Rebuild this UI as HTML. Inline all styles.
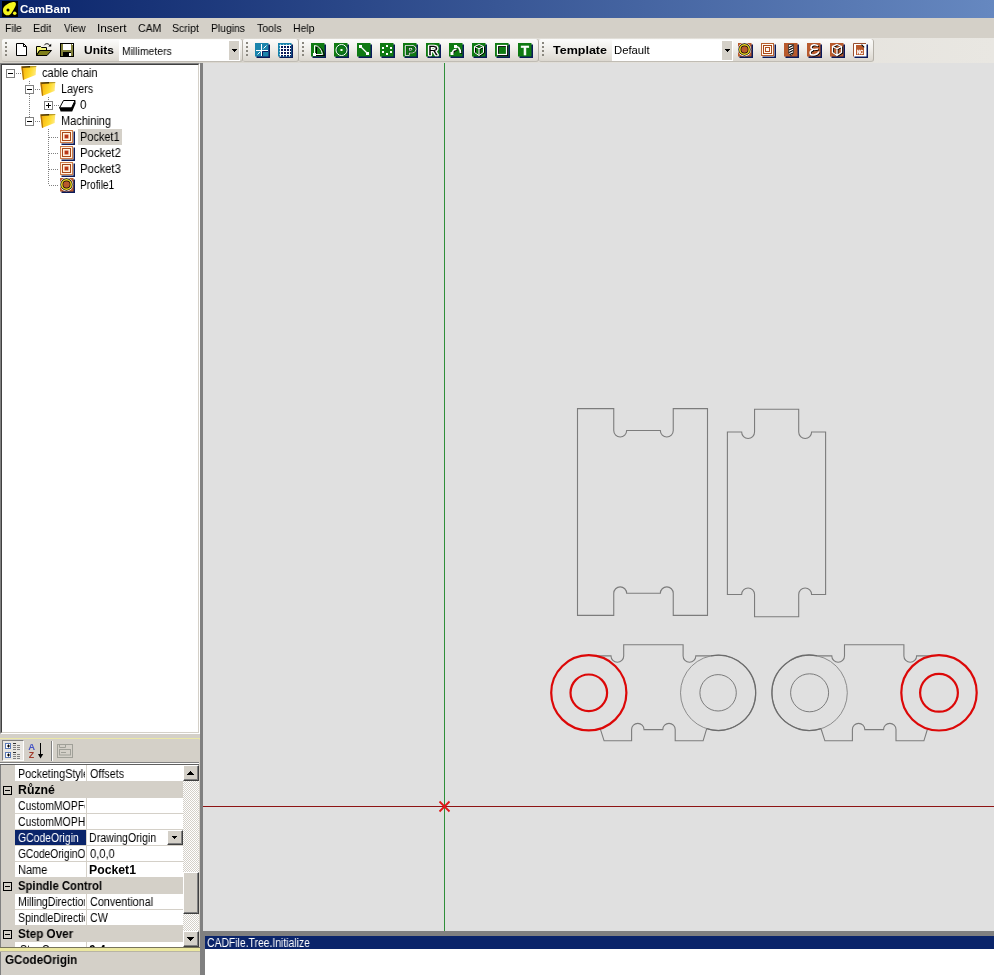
<!DOCTYPE html>
<html>
<head>
<meta charset="utf-8">
<title>CamBam</title>
<style>
html,body{margin:0;padding:0;}
body{width:994px;height:975px;overflow:hidden;background:#d4d0c8;position:relative;
  font-family:"Liberation Sans",sans-serif;font-size:11px;color:#000;line-height:13px;}
.abs{position:absolute;}
.grp{left:0;top:0;width:0;height:0;}
.t{position:absolute;white-space:nowrap;transform-origin:0 50%;line-height:13px;height:13px;will-change:transform;}
#title{left:0;top:0;width:994px;height:18px;background:linear-gradient(90deg,#0a246a 0%,#6688c0 100%);}
#menu{left:0;top:18px;width:994px;height:20px;background:#d4d0c8;}
#tbrow{left:0;top:38px;width:994px;height:25px;background:linear-gradient(90deg,#d6d2ca 0%,#e9e7e2 100%);}
.strip{position:absolute;top:1px;height:23px;border-radius:2px 3px 3px 2px;box-sizing:border-box;
  background:linear-gradient(180deg,#fcfcfb 0%,#f0eeea 45%,#dbd7cf 100%);border-right:1px solid #b4b0a8;border-bottom:1px solid #c0bcb4;}
.grip{position:absolute;left:3px;top:3px;width:2px;height:14px;
  background:repeating-linear-gradient(180deg,#8a877f 0,#8a877f 2px,transparent 2px,transparent 4px);}
.grip:after{content:"";position:absolute;left:1px;top:1px;width:2px;height:14px;
  background:repeating-linear-gradient(180deg,#fff 0,#fff 2px,transparent 2px,transparent 4px);z-index:-1;}
.combo{position:absolute;top:1px;height:21px;background:#fff;}
.combo .btn{position:absolute;right:1px;top:1px;width:10px;height:19px;background:#d4d0c8;}
.combo .btn:after{content:"";position:absolute;left:3px;top:8px;width:5px;height:3px;
  background:linear-gradient(#000,#000) 0 0/5px 1px no-repeat,linear-gradient(#000,#000) 1px 1px/3px 1px no-repeat,linear-gradient(#000,#000) 2px 2px/1px 1px no-repeat;}
#tree{left:0;top:63px;width:200px;height:671px;background:#fff;box-sizing:border-box;
  border-top:1px solid #808080;border-left:1px solid #808080;border-right:1px solid #fff;border-bottom:1px solid #fff;}
#tree:before{content:"";position:absolute;left:0;top:0;right:0;bottom:0;border-top:1px solid #404040;border-left:1px solid #404040;border-right:1px solid #d4d0c8;border-bottom:1px solid #d4d0c8;}
#vsplit{left:200px;top:63px;width:3px;height:912px;background:#808080;}
#hsplit{left:200px;top:931px;width:794px;height:5px;background:#808080;}
#view{left:203px;top:63px;width:791px;height:868px;background:#e0e0e0;}
#log{left:205px;top:936px;width:789px;height:39px;background:#fff;}
#logsel{left:205px;top:936px;width:789px;height:13px;background:#0a246a;}
#vsplit2{left:200px;top:931px;width:5px;height:44px;background:#808080;}
#pgtb{left:0;top:739px;width:199px;height:23px;background:#d4d0c8;box-shadow:0 1px 0 #808080,0 2px 0 #fff,0 3px 0 #606060;}
#pg{left:0;top:765px;width:199px;height:182px;background:#d4d0c8;overflow:hidden;box-shadow:inset 1px 0 0 #808080;}
.row{position:absolute;left:15px;width:168px;height:15px;background:#fff;}
.row .l{position:absolute;left:0;top:0;width:71px;height:100%;}
.row .v{position:absolute;left:71px;top:0;width:96px;height:100%;border-left:1px solid #d4d0c8;}
.cat{position:absolute;left:0;width:183px;height:16px;}
.cat i{position:absolute;left:3px;top:4px;width:7px;height:7px;border:1px solid #000;}
.cat i:before{content:"";position:absolute;left:1px;top:3px;width:5px;height:1px;background:#000;}
.sbtn{position:absolute;width:16px;height:16px;background:#d4d0c8;box-sizing:border-box;
  border-top:1px solid #fff;border-left:1px solid #fff;border-right:1px solid #404040;border-bottom:1px solid #404040;box-shadow:inset -1px -1px 0 #808080;}
#sb{background-image:conic-gradient(#fff 25%,#d4d0c8 0 50%,#fff 0 75%,#d4d0c8 0);background-size:2px 2px;}
.sbtn.up:after,.sbtn.down:after,.sbtn.dd:after{content:"";position:absolute;}
.sbtn.up:after{left:3px;top:5px;width:7px;height:4px;
  background:linear-gradient(#000,#000) 3px 0/1px 1px no-repeat,linear-gradient(#000,#000) 2px 1px/3px 1px no-repeat,linear-gradient(#000,#000) 1px 2px/5px 1px no-repeat,linear-gradient(#000,#000) 0 3px/7px 1px no-repeat;}
.sbtn.down:after{left:3px;top:5px;width:7px;height:4px;
  background:linear-gradient(#000,#000) 0 0/7px 1px no-repeat,linear-gradient(#000,#000) 1px 1px/5px 1px no-repeat,linear-gradient(#000,#000) 2px 2px/3px 1px no-repeat,linear-gradient(#000,#000) 3px 3px/1px 1px no-repeat;}
.sbtn.dd:after{left:4px;top:5px;width:5px;height:3px;
  background:linear-gradient(#000,#000) 0 0/5px 1px no-repeat,linear-gradient(#000,#000) 1px 1px/3px 1px no-repeat,linear-gradient(#000,#000) 2px 2px/1px 1px no-repeat;}
#pgline{left:0;top:738px;width:200px;height:2px;background:linear-gradient(180deg,#ebe8a6 0,#ebe8a6 50%,#dfdcb8 50%,#dfdcb8 100%);}
#pgsep{left:0;top:947px;width:200px;height:5px;background:linear-gradient(180deg,#77745c 0,#77745c 1px,#ece8a0 1px,#ece8a0 4px,#b8b4a4 4px,#b8b4a4 5px);}
#pgdesc{left:0;top:952px;width:200px;height:23px;background:#d4d0c8;box-shadow:inset 1px 0 0 #808080;}

</style>
</head>
<body>
<!-- TITLE -->
<div id="title" class="abs">
  <svg class="abs" style="left:2px;top:1px" width="16" height="16" viewBox="0 0 16 16">
    <rect width="16" height="16" fill="#000"/>
    <path d="M1 9 C1 5 6 2 11 1 C14 0.6 14.5 2.5 13.5 5 C12.5 7.5 11 9.5 9.5 12 C8 14.5 5 15 3 13.5 C1.6 12.5 1 11 1 9 Z" fill="#f4f41c"/>
    <circle cx="12.7" cy="12.2" r="1.8" fill="#f4f41c"/>
    <circle cx="6" cy="9" r="1.5" fill="#000"/>
  </svg>
</div>
<!-- MENU -->
<div id="menu" class="abs"></div>
<!-- TOOLBAR ROW -->
<div id="tbrow" class="abs">
  <div class="strip" style="left:2px;width:241px"><div class="grip"></div>
    <div class="combo" style="left:117px;width:121px"><div class="btn"></div></div>
  </div>
  <div class="strip" style="left:243px;width:56px"><div class="grip"></div></div>
  <div class="strip" style="left:299px;width:240px"><div class="grip"></div></div>
  <div class="strip" style="left:539px;width:335px"><div class="grip"></div>
    <div class="combo" style="left:73px;width:121px"><div class="btn"></div></div>
  </div>
  <svg class="abs" style="left:0;top:0;will-change:transform" width="994" height="25" viewBox="0 38 994 25">
<path d="M16.5 43.5 H23.5 L26.5 46.5 V55.5 H16.5 Z" fill="#fff" stroke="#000"/><path d="M23.5 43.5 V46.5 H26.5" fill="none" stroke="#000"/>
<path d="M36.5 55.5 V46.5 H40.5 L41.5 47.5 H46.5 V50.5 H39.5 L36.5 55.5 Z" fill="#f4f47c" stroke="#000" stroke-linejoin="miter"/><path d="M36.5 55.5 L39.8 50.5 H51.5 L47 55.5 Z" fill="#80801a" stroke="#000"/><path d="M44.3 45.2 C45.5 43.2 48.5 43 50.3 46" fill="none" stroke="#000" stroke-width="1"/><path d="M48.3 46.6 H51.2 V43.8 Z" fill="#000"/>
<rect x="60.5" y="43.5" width="13" height="13" fill="#80803a" stroke="#000"/><rect x="63" y="44" width="8" height="6" fill="#fff"/><rect x="63" y="52" width="8" height="4" fill="#000"/><rect x="69" y="53" width="2" height="3" fill="#fff"/><rect x="72" y="44" width="1" height="1" fill="#fff"/>
<rect x="256.5" y="44.5" width="13.5" height="13.5" fill="#0a1a5a"/><rect x="255" y="43" width="13.5" height="13.5" fill="#1a84ac"/>
<path d="M256 50.5 H268 M261.5 44 V56" stroke="#fff" stroke-width="1" fill="none"/><path d="M262.5 51.5 H268 M262.5 51.5 V56" stroke="#0a1a5a" stroke-width="1" fill="none"/><path d="M263.5 48.5 L266.5 45.5 M257.5 54.5 L260.5 51.5" stroke="#fff" stroke-width="1" fill="none"/>
<rect x="279.5" y="44.5" width="13.5" height="13.5" fill="#0a1a5a"/><rect x="278" y="43" width="13.5" height="13.5" fill="#1a84ac"/>
<rect x="280" y="45" width="11" height="11" fill="#0a1a5a"/>
<path d="M280.5 44.5 V56.5 M279.5 45.5 H291 M283.5 44.5 V56.5 M279.5 48.5 H291 M286.5 44.5 V56.5 M279.5 51.5 H291 M289.5 44.5 V56.5 M279.5 54.5 H291" stroke="#fff" stroke-width="1" fill="none"/>
<rect x="312.5" y="44.5" width="13.5" height="13.5" fill="#0a1a5a"/><rect x="311" y="43" width="13.5" height="13.5" fill="#0f7a12"/>
<rect x="335.5" y="44.5" width="13.5" height="13.5" fill="#0a1a5a"/><rect x="334" y="43" width="13.5" height="13.5" fill="#0f7a12"/>
<rect x="358.5" y="44.5" width="13.5" height="13.5" fill="#0a1a5a"/><rect x="357" y="43" width="13.5" height="13.5" fill="#0f7a12"/>
<rect x="381.5" y="44.5" width="13.5" height="13.5" fill="#0a1a5a"/><rect x="380" y="43" width="13.5" height="13.5" fill="#0f7a12"/>
<rect x="404.5" y="44.5" width="13.5" height="13.5" fill="#0a1a5a"/><rect x="403" y="43" width="13.5" height="13.5" fill="#0f7a12"/>
<rect x="427.5" y="44.5" width="13.5" height="13.5" fill="#0a1a5a"/><rect x="426" y="43" width="13.5" height="13.5" fill="#0f7a12"/>
<rect x="450.5" y="44.5" width="13.5" height="13.5" fill="#0a1a5a"/><rect x="449" y="43" width="13.5" height="13.5" fill="#0f7a12"/>
<rect x="473.5" y="44.5" width="13.5" height="13.5" fill="#0a1a5a"/><rect x="472" y="43" width="13.5" height="13.5" fill="#0f7a12"/>
<rect x="496.5" y="44.5" width="13.5" height="13.5" fill="#0a1a5a"/><rect x="495" y="43" width="13.5" height="13.5" fill="#0f7a12"/>
<rect x="519.5" y="44.5" width="13.5" height="13.5" fill="#0a1a5a"/><rect x="518" y="43" width="13.5" height="13.5" fill="#0f7a12"/>
<path d="M315.5 54 V45.5 Q322 46 323.5 54.5 H315" fill="none" stroke="#000" stroke-width="1" transform="translate(1 1)"/><path d="M314.5 54 V45.5 Q321 46 322.5 54.5 H315" fill="none" stroke="#fff" stroke-width="1"/><rect x="313" y="53" width="3" height="3" fill="#fff"/>
<circle cx="341.5" cy="50" r="5.5" fill="none" stroke="#fff" stroke-width="1"/><circle cx="341.5" cy="50" r="4.3" fill="none" stroke="#053" stroke-width="0.8"/><rect x="340.5" y="49" width="2" height="2" fill="#fff"/>
<path d="M360.5 46.5 L367.5 53.5" stroke="#fff" stroke-width="1.3"/><rect x="359" y="45" width="3" height="3" fill="#fff"/><rect x="366" y="52" width="3" height="3" fill="#fff"/>
<rect x="386" y="45" width="2" height="2" fill="#fff"/>
<rect x="382" y="47" width="2" height="2" fill="#fff"/>
<rect x="390" y="47" width="2" height="2" fill="#fff"/>
<rect x="382" y="51" width="2" height="2" fill="#fff"/>
<rect x="390" y="51" width="2" height="2" fill="#fff"/>
<rect x="386" y="53" width="2" height="2" fill="#fff"/>
<text transform="translate(404.9 54.6) scale(1.28 1)" font-family="Liberation Sans, sans-serif" font-weight="bold" font-size="12.6" fill="#000" stroke="#000" stroke-width="1.7" stroke-linejoin="round">P</text><text transform="translate(404.9 54.6) scale(1.28 1)" font-family="Liberation Sans, sans-serif" font-weight="bold" font-size="12.6" fill="#0f7a12" stroke="#fff" stroke-width="1.9" stroke-linejoin="round" paint-order="stroke">P</text><text transform="translate(404.9 54.6) scale(1.28 1)" font-family="Liberation Sans, sans-serif" font-weight="bold" font-size="12.6" fill="#0f7a12" stroke="#031" stroke-width="0.5" stroke-linejoin="round">P</text>
<text transform="translate(428.3 55) scale(1.08 1)" font-family="Liberation Sans, sans-serif" font-size="12.6" fill="#fff" stroke="#fff" stroke-width="2.7" stroke-linejoin="round">R</text><text transform="translate(428.3 55) scale(1.08 1)" font-family="Liberation Sans, sans-serif" font-size="12.6" fill="#000" stroke="#000" stroke-width="0.25">R</text>
<path d="M452 53.5 Q453 49 456.5 49.5 M455 46.5 Q460 46 460.5 53" fill="none" stroke="#000" stroke-width="1.6" transform="translate(0.8 0.8)"/><path d="M452 53.5 Q453 49 456.5 49.5 M455 46.5 Q460 46 460.5 53" fill="none" stroke="#fff" stroke-width="1.6"/><rect x="450.5" y="52" width="3" height="3" fill="#fff"/><rect x="454" y="45" width="3" height="3" fill="#fff"/>
<path d="M479 44.5 L483.5 46.5 V52.5 L479 55.5 L474.5 52.5 V46.5 Z M474.5 46.5 L479 48.8 L483.5 46.5 M479 48.8 V55.5" fill="none" stroke="#000" stroke-width="1" transform="translate(1 0.6)"/><path d="M479 44.5 L483.5 46.5 V52.5 L479 55.5 L474.5 52.5 V46.5 Z M474.5 46.5 L479 48.8 L483.5 46.5 M479 48.8 V55.5" fill="none" stroke="#fff" stroke-width="1"/>
<rect x="498.5" y="46.5" width="9" height="9" fill="none" stroke="#000"/><rect x="497.5" y="45.5" width="9" height="9" fill="none" stroke="#fff" stroke-width="1.2"/>
<text x="521" y="55.3" font-family="Liberation Sans, sans-serif" font-weight="bold" font-size="13" fill="#fff" stroke="#fff" stroke-width="0.5">T</text>
<rect x="739.5" y="44.5" width="13.5" height="13.5" fill="#0a1a5a"/><rect x="738" y="43" width="13.5" height="13.5" fill="#b85a2c"/>
<circle cx="744.5" cy="49.5" r="6.7" fill="#fff"/><circle cx="744.5" cy="49.5" r="4.7" fill="#b85a2c" stroke="#000" stroke-width="2.9"/><circle cx="744.5" cy="49.5" r="4.7" fill="none" stroke="#f4dc20" stroke-width="1.5"/>
<rect x="762.5" y="44.5" width="13.5" height="13.5" fill="#0a1a5a"/><rect x="761" y="43" width="13.5" height="13.5" fill="#fffaf2"/>
<rect x="761.5" y="43.5" width="12" height="12" fill="none" stroke="#b86030"/><rect x="763.5" y="45.5" width="8" height="8" fill="none" stroke="#a84818"/><rect x="765.5" y="47.5" width="4" height="4" fill="none" stroke="#b05020"/>
<rect x="785.5" y="44.5" width="13.5" height="13.5" fill="#0a1a5a"/><rect x="784" y="43" width="13.5" height="13.5" fill="#b85a2c"/>
<path d="M788.5 44.5 H793.5 V53 L791 56 L788.5 53 Z" fill="#fff" stroke="#000" stroke-width="0.6"/><path d="M789 47.5 L793 45.5 M789 50 L793 48 M789 52.5 L793 50.5 M790 54.5 L793 53" stroke="#000" stroke-width="1.1" fill="none"/>
<rect x="808.5" y="44.5" width="13.5" height="13.5" fill="#0a1a5a"/><rect x="807" y="43" width="13.5" height="13.5" fill="#b85a2c"/>
<path d="M818 46 C816 44 811 44 811 47.5 C811 50 816 49.5 818 49 M813 50 C809 51 809 55.5 814 55 C817 54.7 818.5 53 819 51.5" fill="none" stroke="#000" stroke-width="1.6" transform="translate(0.7 0.7)"/><path d="M818 46 C816 44 811 44 811 47.5 C811 50 816 49.5 818 49 M813 50 C809 51 809 55.5 814 55 C817 54.7 818.5 53 819 51.5" fill="none" stroke="#fff" stroke-width="1.5"/>
<rect x="831.5" y="44.5" width="13.5" height="13.5" fill="#0a1a5a"/><rect x="830" y="43" width="13.5" height="13.5" fill="#b85a2c"/>
<path d="M837 44.5 L841.5 46.5 V52.5 L837 55.5 L832.5 52.5 V46.5 Z M832.5 46.5 L837 48.8 L841.5 46.5 M837 48.8 V55.5" fill="none" stroke="#000" stroke-width="1.2" transform="translate(0.9 0.6)"/><path d="M837 44.5 L841.5 46.5 V52.5 L837 55.5 L832.5 52.5 V46.5 Z M832.5 46.5 L837 48.8 L841.5 46.5 M837 48.8 V55.5" fill="none" stroke="#fff" stroke-width="1.3"/>
<rect x="854.5" y="44.5" width="13.5" height="13.5" fill="#0a1a5a"/><rect x="853" y="43" width="13.5" height="13.5" fill="#fff"/>
<path d="M853.5 56.5 V43.5 H866" fill="none" stroke="#9a5030" stroke-width="1"/><path d="M856 45 H861.5 L864 47.5 V55 H856 Z" fill="#b85a2c"/><path d="M861.5 44.6 L864.2 47.3" stroke="#000" stroke-width="1.1"/><text x="856.9" y="53.8" font-family="Liberation Sans, sans-serif" font-weight="bold" font-size="5.4" fill="#fff" stroke="#fff" stroke-width="0.3" textLength="6.4" lengthAdjust="spacingAndGlyphs">NC</text>
  </svg>
</div>
<!-- TREE -->
<div id="tree" class="abs">
  <div class="abs" style="left:77px;top:65px;width:44px;height:16px;background:#d4d0c8"></div>
  <svg class="abs" style="left:-1px;top:-1px" width="199" height="670" viewBox="0 63 199 670">
<defs><linearGradient id="fg" x1="0" y1="0" x2="1" y2="0.25"><stop offset="0" stop-color="#e89808"/><stop offset="0.35" stop-color="#fbc418"/><stop offset="0.7" stop-color="#ffdc30"/><stop offset="1" stop-color="#ffe878"/></linearGradient></defs>
<path d="M16 73.5 H21" stroke="#808080" stroke-dasharray="1 1" stroke-width="1" fill="none"/>
<path d="M29.5 81 V85" stroke="#808080" stroke-dasharray="1 1" stroke-width="1" fill="none"/>
<path d="M29.5 94 V117" stroke="#808080" stroke-dasharray="1 1" stroke-width="1" fill="none"/>
<path d="M35 89.5 H40" stroke="#808080" stroke-dasharray="1 1" stroke-width="1" fill="none"/>
<path d="M48.5 97 V101" stroke="#808080" stroke-dasharray="1 1" stroke-width="1" fill="none"/>
<path d="M54 105.5 H59" stroke="#808080" stroke-dasharray="1 1" stroke-width="1" fill="none"/>
<path d="M35 121.5 H40" stroke="#808080" stroke-dasharray="1 1" stroke-width="1" fill="none"/>
<path d="M48.5 129 V185" stroke="#808080" stroke-dasharray="1 1" stroke-width="1" fill="none"/>
<path d="M49 137.5 H59" stroke="#808080" stroke-dasharray="1 1" stroke-width="1" fill="none"/>
<path d="M49 153.5 H59" stroke="#808080" stroke-dasharray="1 1" stroke-width="1" fill="none"/>
<path d="M49 169.5 H59" stroke="#808080" stroke-dasharray="1 1" stroke-width="1" fill="none"/>
<path d="M49 185.5 H59" stroke="#808080" stroke-dasharray="1 1" stroke-width="1" fill="none"/>
<rect x="6.5" y="69.5" width="8" height="8" fill="#fff" stroke="#808080"/><rect x="8" y="73" width="5" height="1" fill="#000"/>
<rect x="25.5" y="85.5" width="8" height="8" fill="#fff" stroke="#808080"/><rect x="27" y="89" width="5" height="1" fill="#000"/>
<rect x="44.5" y="101.5" width="8" height="8" fill="#fff" stroke="#808080"/><rect x="46" y="105" width="5" height="1" fill="#000"/><rect x="48" y="103" width="1" height="5" fill="#000"/>
<rect x="25.5" y="117.5" width="8" height="8" fill="#fff" stroke="#808080"/><rect x="27" y="121" width="5" height="1" fill="#000"/>
<g transform="translate(21 65)"><path d="M0.3 1.6 L15.3 1.1 L14.6 10 L2 14.9 Z" fill="url(#fg)"/><path d="M0.3 1.6 L2 14.9 L3.2 14.4 L1.8 2.6 Z" fill="#a86a08" opacity="0.85"/><path d="M0.3 1.4 L9.5 1.1 L9 2.4 L1.6 2.8 Z" fill="#3a2800"/><path d="M9.5 1.1 L15.3 1.0 L15.2 1.9 L9 2.4 Z" fill="#a88a20" opacity="0.8"/></g>
<g transform="translate(40 81)"><path d="M0.3 1.6 L15.3 1.1 L14.6 10 L2 14.9 Z" fill="url(#fg)"/><path d="M0.3 1.6 L2 14.9 L3.2 14.4 L1.8 2.6 Z" fill="#a86a08" opacity="0.85"/><path d="M0.3 1.4 L9.5 1.1 L9 2.4 L1.6 2.8 Z" fill="#3a2800"/><path d="M9.5 1.1 L15.3 1.0 L15.2 1.9 L9 2.4 Z" fill="#a88a20" opacity="0.8"/></g>
<g transform="translate(40 113)"><path d="M0.3 1.6 L15.3 1.1 L14.6 10 L2 14.9 Z" fill="url(#fg)"/><path d="M0.3 1.6 L2 14.9 L3.2 14.4 L1.8 2.6 Z" fill="#a86a08" opacity="0.85"/><path d="M0.3 1.4 L9.5 1.1 L9 2.4 L1.6 2.8 Z" fill="#3a2800"/><path d="M9.5 1.1 L15.3 1.0 L15.2 1.9 L9 2.4 Z" fill="#a88a20" opacity="0.8"/></g>
<path d="M63.5 100.5 H75 L71.5 108 H59.5 Z" fill="#fff" stroke="#000" stroke-width="1"/><path d="M59.3 107.6 H71.6 L75.4 100.2 L75.6 103.6 L72.2 111.4 H60.6 Z" fill="#000"/>
<rect x="61.5" y="131.5" width="13.5" height="13.5" fill="#0a1a5a"/><rect x="60" y="130" width="13.5" height="13.5" fill="#fff2e0"/><rect x="60.5" y="130.5" width="12" height="12" fill="none" stroke="#cc7a48"/><rect x="62.5" y="132.5" width="8" height="8" fill="none" stroke="#a84818"/><rect x="64.5" y="134.5" width="4" height="4" fill="#c8502a" stroke="#fff2e0" stroke-width="0"/><rect x="65" y="135" width="3" height="3" fill="#b83818"/>
<rect x="61.5" y="147.5" width="13.5" height="13.5" fill="#0a1a5a"/><rect x="60" y="146" width="13.5" height="13.5" fill="#fff2e0"/><rect x="60.5" y="146.5" width="12" height="12" fill="none" stroke="#cc7a48"/><rect x="62.5" y="148.5" width="8" height="8" fill="none" stroke="#a84818"/><rect x="64.5" y="150.5" width="4" height="4" fill="#c8502a" stroke="#fff2e0" stroke-width="0"/><rect x="65" y="151" width="3" height="3" fill="#b83818"/>
<rect x="61.5" y="163.5" width="13.5" height="13.5" fill="#0a1a5a"/><rect x="60" y="162" width="13.5" height="13.5" fill="#fff2e0"/><rect x="60.5" y="162.5" width="12" height="12" fill="none" stroke="#cc7a48"/><rect x="62.5" y="164.5" width="8" height="8" fill="none" stroke="#a84818"/><rect x="64.5" y="166.5" width="4" height="4" fill="#c8502a" stroke="#fff2e0" stroke-width="0"/><rect x="65" y="167" width="3" height="3" fill="#b83818"/>
<rect x="61.5" y="179.5" width="13.5" height="13.5" fill="#0a1a5a"/><rect x="60" y="178" width="13.5" height="13.5" fill="#b85a2c"/><circle cx="66.5" cy="184.5" r="6.7" fill="#fff"/><circle cx="66.5" cy="184.5" r="4.7" fill="#b85a2c" stroke="#000" stroke-width="2.9"/><circle cx="66.5" cy="184.5" r="4.7" fill="none" stroke="#f4dc20" stroke-width="1.5"/>
  </svg>
</div>
<!-- VIEW -->
<div id="view" class="abs">
<svg class="abs" style="left:0;top:0" width="791" height="868" viewBox="203 63 791 868" fill="none">
  <line x1="444.5" y1="63" x2="444.5" y2="931" stroke="#2f8f3a" stroke-width="1"/>
  <line x1="203" y1="806.5" x2="994" y2="806.5" stroke="#8e1414" stroke-width="1"/>
  <path d="M439.5 801.5 L449.5 811.5 M449.5 801.5 L439.5 811.5" stroke="#e01818" stroke-width="1.8"/>
  <g stroke="#7c7c7c" stroke-width="1.1">
    <path d="M577.5 408.6 H613.75 V430.55 A6.45 6.45 0 0 0 626.65 430.55 H660.35 A6.45 6.45 0 0 0 673.25 430.55 V408.6 H707.5 V615.4 H673.25 V593.3 A6.45 6.45 0 0 0 660.35 593.3 H626.65 A6.45 6.45 0 0 0 613.75 593.3 V615.4 H577.5 Z"/>
    <path d="M727.4 432 H741.65 A6.45 6.45 0 0 0 754.55 432 V409.3 H798.7 V432 A6.45 6.45 0 0 0 811.6 432 H825.6 V594.5 H811.6 A6.45 6.45 0 0 0 798.7 594.5 V616.8 H754.55 V594.5 A6.45 6.45 0 0 0 741.65 594.5 H727.4 Z"/>
  </g>
  <g stroke="#7c7c7c" stroke-width="1.1">
    <path d="M596.02 655.9 H611.00 A6.35 6.35 0 0 0 623.70 655.9 V644.8 H683.10 V655.9 A6.35 6.35 0 0 0 695.80 655.9 H710.88 M600.20 728.63 L604.10 740.8 H631.60 V729.6 A6.2 6.2 0 0 1 644.00 729.6 H662.80 A6.2 6.2 0 0 1 675.20 729.6 V740.8 H703.10 L706.70 728.63"/>
    <circle cx="718.1" cy="692.8" r="37.6" stroke="#8c8c8c" stroke-width="1"/>
    <path d="M710.88 655.9 A37.6 37.6 0 1 1 706.70 728.63" stroke="#6c6c6c" stroke-width="1.3"/>
    <circle cx="718.1" cy="692.8" r="18.2" stroke-width="1"/>
  </g>
  <g stroke="#dc0808" stroke-width="2.2"><circle cx="588.8" cy="692.8" r="37.6"/><circle cx="588.8" cy="692.8" r="18.3"/></g>
  <g stroke="#7c7c7c" stroke-width="1.1">
    <path d="M817.33 655.9 H831.80 A6.35 6.35 0 0 0 844.50 655.9 V644.8 H903.90 V655.9 A6.35 6.35 0 0 0 916.60 655.9 H931.27 M821.03 728.72 L824.90 740.8 H852.40 V729.6 A6.2 6.2 0 0 1 864.80 729.6 H883.60 A6.2 6.2 0 0 1 896.00 729.6 V740.8 H923.90 L927.57 728.72"/>
    <circle cx="809.6" cy="692.8" r="37.7" stroke="#8c8c8c" stroke-width="1"/>
    <path d="M817.33 655.9 A37.7 37.7 0 1 0 821.03 728.72" stroke="#6c6c6c" stroke-width="1.3"/>
    <circle cx="809.6" cy="692.8" r="19.0" stroke-width="1"/>
  </g>
  <g stroke="#dc0808" stroke-width="2.2"><circle cx="939.0" cy="692.8" r="37.7"/><circle cx="939.0" cy="692.8" r="18.9"/></g>
</svg>
</div>
<div id="vsplit" class="abs"></div>
<div id="hsplit" class="abs"></div>
<div id="vsplit2" class="abs"></div>
<div id="log" class="abs"></div>
<div id="logsel" class="abs"></div>
<!-- PROPERTY GRID -->
<div id="pgline" class="abs"></div>
<div id="pgtb" class="abs">
<div class="abs" style="left:2px;top:1px;width:22px;height:21px;background:#e9e7e2;border:1px solid #808080;box-sizing:border-box;border-right-color:#fff;border-bottom-color:#fff"></div>
<div class="abs" style="left:51px;top:2px;width:1px;height:20px;background:#808080;border-right:1px solid #fff"></div>
<svg class="abs" style="left:0;top:0;will-change:transform" width="199" height="24" viewBox="0 739 199 24">
<g fill="#fff" stroke="#5a7ab8" stroke-width="1"><rect x="5.5" y="743.5" width="5" height="5"/><rect x="5.5" y="752.5" width="5" height="5"/></g>
<g fill="#000"><rect x="7" y="745.5" width="3" height="1"/><rect x="8" y="744.5" width="1" height="3"/><rect x="7" y="754.5" width="3" height="1"/><rect x="8" y="753.5" width="1" height="3"/></g>
<path d="M13 745.5 H16 M17 745.5 H20 M13 747.5 H16 M17 747.5 H20 M13 749.5 H16 M17 749.5 H20 M13 754.5 H16 M17 754.5 H20 M13 756.5 H16 M17 756.5 H20 M13 758.5 H16 M17 758.5 H20" stroke="#808080" stroke-width="1"/>
<path d="M13 743.5 H16 M13 752.5 H16" stroke="#303030" stroke-width="1"/>
<text x="28.2" y="749.8" font-family="Liberation Sans, sans-serif" font-size="9.5" font-weight="bold" fill="#4452c4">A</text>
<text x="28.8" y="758" font-family="Liberation Sans, sans-serif" font-size="8.8" font-weight="bold" fill="#a03c2c">Z</text>
<path d="M40.5 743 V757" stroke="#000" stroke-width="1"/><path d="M38 754 H43.2 L40.5 758.5 Z" fill="#000"/>
<g fill="none" stroke="#a0a098" stroke-width="1"><rect x="57.5" y="744.5" width="15" height="13"/><path d="M59.5 744.5 V747.5 H65.5 V744.5"/><rect x="59.5" y="749.5" width="11" height="5.5"/><path d="M61 752.5 H66"/></g>
</svg>
</div>
<div id="pg" class="abs">
  <div class="row" style="top:0px;height:16px"><div class="l"></div><div class="v"></div></div>
  <div class="cat" style="top:17px"><i></i></div>
  <div class="row" style="top:33px;height:15px"><div class="l"></div><div class="v"></div></div>
  <div class="row" style="top:49px;height:15px"><div class="l"></div><div class="v"></div></div>
  <div class="row" style="top:65px;height:15px"><div class="l" style="background:#0a246a"></div><div class="v"></div><div class="sbtn dd" style="left:152px;top:0;width:16px;height:15px"></div></div>
  <div class="row" style="top:81px;height:15px"><div class="l"></div><div class="v"></div></div>
  <div class="row" style="top:97px;height:15px"><div class="l"></div><div class="v"></div></div>
  <div class="cat" style="top:113px"><i></i></div>
  <div class="row" style="top:129px;height:15px"><div class="l"></div><div class="v"></div></div>
  <div class="row" style="top:145px;height:15px"><div class="l"></div><div class="v"></div></div>
  <div class="cat" style="top:161px"><i></i></div>
  <div class="row" style="top:177px;height:15px"><div class="l"></div><div class="v"></div></div>
  <div class="abs" id="sb" style="left:183px;top:0;width:16px;height:182px"></div>
  <div class="sbtn up" style="left:183px;top:0"></div>
  <div class="sbtn" style="left:183px;top:107px;height:42px"></div>
  <div class="sbtn down" style="left:183px;top:166px"></div>
</div>
<div id="pgsep" class="abs"></div>
<div id="pgdesc" class="abs"></div>
<!-- TEXT -->
<div class="abs grp" id="title-text">
  <div class="t" id="t0" style="left:20.00px;top:3px;color:#fff;font-size:11px;font-weight:bold;transform:scaleX(1.0528);">CamBam</div>
</div>
<div class="abs grp" id="menubar">
  <div class="t" id="t1" style="left:5.00px;top:22px;color:#000;font-size:11px;transform:scaleX(0.9546);">File</div>
  <div class="t" id="t2" style="left:33.00px;top:22px;color:#000;font-size:11px;transform:scaleX(0.9721);">Edit</div>
  <div class="t" id="t3" style="left:64.00px;top:22px;color:#000;font-size:11px;transform:scaleX(0.9029);">View</div>
  <div class="t" id="t4" style="left:97.00px;top:22px;color:#000;font-size:11px;transform:scaleX(1.0740);">Insert</div>
  <div class="t" id="t5" style="left:138.00px;top:22px;color:#000;font-size:11px;transform:scaleX(0.9575);">CAM</div>
  <div class="t" id="t6" style="left:172.00px;top:22px;color:#000;font-size:11px;transform:scaleX(0.9562);">Script</div>
  <div class="t" id="t7" style="left:211.00px;top:22px;color:#000;font-size:11px;transform:scaleX(0.9415);">Plugins</div>
  <div class="t" id="t8" style="left:257.00px;top:22px;color:#000;font-size:11px;transform:scaleX(0.9593);">Tools</div>
  <div class="t" id="t9" style="left:293.00px;top:22px;color:#000;font-size:11px;transform:scaleX(0.9526);">Help</div>
</div>
<div class="abs grp" id="toolbar-labels">
  <div class="t" id="t10" style="left:84.00px;top:44px;color:#000;font-size:11px;font-weight:bold;transform:scaleX(1.0903);">Units</div>
  <div class="t" id="t11" style="left:122.00px;top:45px;color:#000;font-size:11px;transform:scaleX(0.9465);">Millimeters</div>
  <div class="t" id="t12" style="left:553.00px;top:44px;color:#000;font-size:11px;font-weight:bold;transform:scaleX(1.1363);">Template</div>
  <div class="t" id="t13" style="left:614.00px;top:44px;color:#000;font-size:11px;transform:scaleX(1.0258);">Default</div>
</div>
<div class="abs grp" id="tree-labels">
  <div class="t" id="t14" style="left:42.00px;top:67px;color:#000;font-size:12px;transform:scaleX(0.9148);">cable chain</div>
  <div class="t" id="t15" style="left:61.00px;top:83px;color:#000;font-size:12px;transform:scaleX(0.8931);">Layers</div>
  <div class="t" id="t16" style="left:80.00px;top:99px;color:#000;font-size:12px;transform:scaleX(0.9625);">0</div>
  <div class="t" id="t17" style="left:61.00px;top:115px;color:#000;font-size:12px;transform:scaleX(0.9143);">Machining</div>
  <div class="t" id="t18" style="left:80.00px;top:131px;color:#000;font-size:12px;transform:scaleX(0.9119);">Pocket1</div>
  <div class="t" id="t19" style="left:80.00px;top:147px;color:#000;font-size:12px;transform:scaleX(0.9411);">Pocket2</div>
  <div class="t" id="t20" style="left:80.00px;top:163px;color:#000;font-size:12px;transform:scaleX(0.9406);">Pocket3</div>
  <div class="t" id="t21" style="left:80.00px;top:179px;color:#000;font-size:12px;transform:scaleX(0.8387);">Profile1</div>
</div>
<div class="abs grp" id="log-lines">
  <div class="t" id="t22" style="left:207.00px;top:937px;color:#fff;font-size:12px;transform:scaleX(0.8653);">CADFile.Tree.Initialize</div>
</div>
<div class="abs grp" id="propgrid-help">
  <div class="t" id="t23" style="left:5.00px;top:954px;color:#000;font-size:12px;font-weight:bold;transform:scaleX(0.9677);">GCodeOrigin</div>
</div>
<div class="abs grp" id="propgrid-cells">
  <div class="abs" style="left:15px;top:0;width:70px;height:975px;overflow:hidden"><div class="t" id="t24" style="left:3.00px;top:768px;color:#000;font-size:12px;transform:scaleX(0.8950);">PocketingStyle</div></div>
  <div class="t" id="t25" style="left:90.00px;top:768px;color:#000;font-size:12px;transform:scaleX(0.9044);">Offsets</div>
  <div class="t" id="t26" style="left:18.00px;top:784px;color:#000;font-size:12px;font-weight:bold;transform:scaleX(1.0245);">Různé</div>
  <div class="abs" style="left:15px;top:0;width:70px;height:975px;overflow:hidden"><div class="t" id="t27" style="left:3.00px;top:800px;color:#000;font-size:12px;transform:scaleX(0.8700);">CustomMOPFooter</div></div>
  <div class="abs" style="left:15px;top:0;width:70px;height:975px;overflow:hidden"><div class="t" id="t28" style="left:3.00px;top:816px;color:#000;font-size:12px;transform:scaleX(0.8700);">CustomMOPHeader</div></div>
  <div class="t" id="t29" style="left:18.00px;top:832px;color:#fff;font-size:12px;transform:scaleX(0.8674);">GCodeOrigin</div>
  <div class="t" id="t30" style="left:89.00px;top:832px;color:#000;font-size:12px;transform:scaleX(0.8845);">DrawingOrigin</div>
  <div class="abs" style="left:15px;top:0;width:70px;height:975px;overflow:hidden"><div class="t" id="t31" style="left:3.00px;top:848px;color:#000;font-size:12px;transform:scaleX(0.8500);">GCodeOriginOffset</div></div>
  <div class="t" id="t32" style="left:90.00px;top:848px;color:#000;font-size:12px;transform:scaleX(0.9279);">0,0,0</div>
  <div class="t" id="t33" style="left:18.00px;top:864px;color:#000;font-size:12px;transform:scaleX(0.9168);">Name</div>
  <div class="t" id="t34" style="left:89.00px;top:864px;color:#000;font-size:12px;font-weight:bold;transform:scaleX(1.0199);">Pocket1</div>
  <div class="t" id="t35" style="left:18.00px;top:880px;color:#000;font-size:12px;font-weight:bold;transform:scaleX(0.9401);">Spindle Control</div>
  <div class="abs" style="left:15px;top:0;width:70px;height:975px;overflow:hidden"><div class="t" id="t36" style="left:3.00px;top:896px;color:#000;font-size:12px;transform:scaleX(0.8750);">MillingDirection</div></div>
  <div class="t" id="t37" style="left:90.00px;top:896px;color:#000;font-size:12px;transform:scaleX(0.9012);">Conventional</div>
  <div class="abs" style="left:15px;top:0;width:70px;height:975px;overflow:hidden"><div class="t" id="t38" style="left:3.00px;top:912px;color:#000;font-size:12px;transform:scaleX(0.8850);">SpindleDirection</div></div>
  <div class="t" id="t39" style="left:90.00px;top:912px;color:#000;font-size:12px;transform:scaleX(0.8863);">CW</div>
  <div class="t" id="t40" style="left:18.00px;top:928px;color:#000;font-size:12px;font-weight:bold;transform:scaleX(0.9730);">Step Over</div>
  <div class="abs" style="left:15px;top:0;width:70px;height:947px;overflow:hidden"><div class="t" id="t41" style="left:5.00px;top:944px;color:#000;font-size:12px;transform:scaleX(0.8800);">StepOver</div></div>
  <div class="abs" style="left:87px;top:0;width:96px;height:947px;overflow:hidden"><div class="t" id="t42" style="left:2.00px;top:944px;color:#000;font-size:12px;font-weight:bold;">0.4</div></div>
</div>

</body>
</html>
